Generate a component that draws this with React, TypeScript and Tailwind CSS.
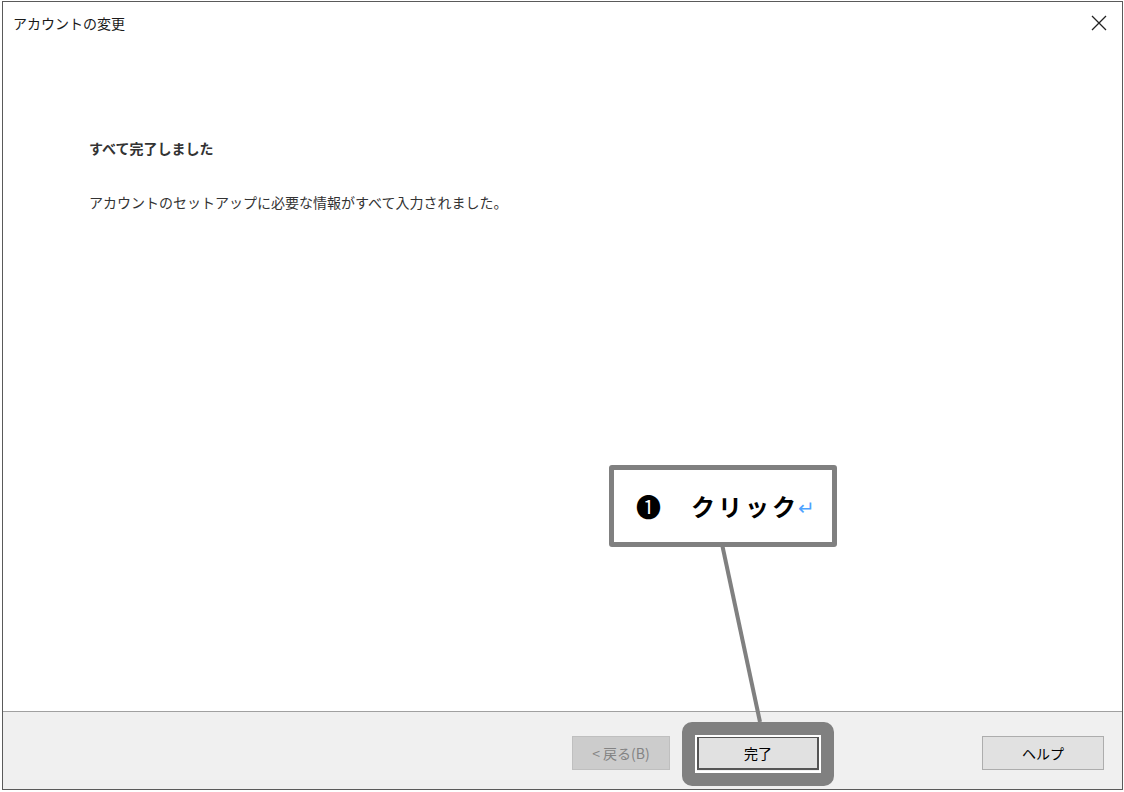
import React from 'react';

const jp = { fontFamily: '"Noto Sans CJK JP", "Noto Sans", sans-serif' };

function Button({ label, disabled, focused }: { label: string; disabled?: boolean; focused?: boolean }) {
  let cls = 'border-[#adadad] bg-[#e1e1e1] text-black';
  if (disabled) cls = 'border-[#bfbfbf] bg-[#cccccc] text-[#838383]';
  if (focused) cls = 'border-2 border-[#555555] bg-[#e1e1e1] text-black';
  return (
    <button
      className={`flex h-[34px] w-[122px] items-center justify-center border text-[14px] ${cls}`}
      style={jp}
    >
      {label}
    </button>
  );
}

export default function App() {
  return (
    <div className="relative h-[792px] w-[1124px] overflow-hidden bg-white" style={jp}>
      <div className="ml-[2px] mt-[1px] flex h-[789px] w-[1121px] flex-col border border-[#5a5a5a] bg-white">
        {/* title bar */}
        <div className="flex h-[42px] items-center justify-between pl-[10px] pr-[12px]">
          <span className="text-[14px] text-[#1a1a1a]">アカウントの変更</span>
          <svg width="16" height="16" viewBox="0 0 16 16" className="mr-[3px]">
            <path d="M1 1L15 15M15 1L1 15" stroke="#222" strokeWidth="1.3" />
          </svg>
        </div>

        {/* body */}
        <div className="flex-1 pl-[86px] pt-[93px] text-[14px] text-[#333333]">
          <p className="font-semibold leading-[22px]">すべて完了しました</p>
          <p className="mt-[32px] leading-[22px]">アカウントのセットアップに必要な情報がすべて入力されました。</p>
        </div>

        {/* footer */}
        <div className="flex h-[78px] items-start border-t border-[#a0a0a0] bg-[#f0f0f0] pt-[24px]">
          <div className="ml-[569px] w-[98px]">
            <div className="flex h-[34px] w-[98px] items-center justify-center border border-[#bfbfbf] bg-[#cccccc] text-[14px] text-[#838383]">
              &lt; 戻る(B)
            </div>
          </div>
          <div className="ml-[27px]">
            <Button label="完了" focused />
          </div>
          <div className="ml-[163px]">
            <Button label="ヘルプ" />
          </div>
        </div>
      </div>

      {/* highlight ring around 完了 */}
      <div className="absolute left-[682px] top-[722px] h-[64px] w-[152px] rounded-[10px] border-[13px] border-[#808080]">
        <div className="h-full w-full border-[2px] border-white" />
      </div>

      {/* leader line */}
      <svg className="absolute left-0 top-0" width="1124" height="792">
        <line x1="722" y1="544" x2="760" y2="722" stroke="#808080" strokeWidth="4" />
      </svg>

      {/* callout */}
      <div className="absolute left-[609px] top-[465px] flex h-[82px] w-[228px] items-center rounded-[3px] border-[5px] border-[#808080] bg-white pl-[22px]">
        <span className="text-[25px] leading-none text-black">❶</span>
        <span className="ml-[30px] text-[24px] font-semibold tracking-[3px] text-black">クリック</span>
        <span className="-ml-[1px] mt-[2px] text-[20px] leading-none text-[#4da3ff]">↵</span>
      </div>
    </div>
  );
}
